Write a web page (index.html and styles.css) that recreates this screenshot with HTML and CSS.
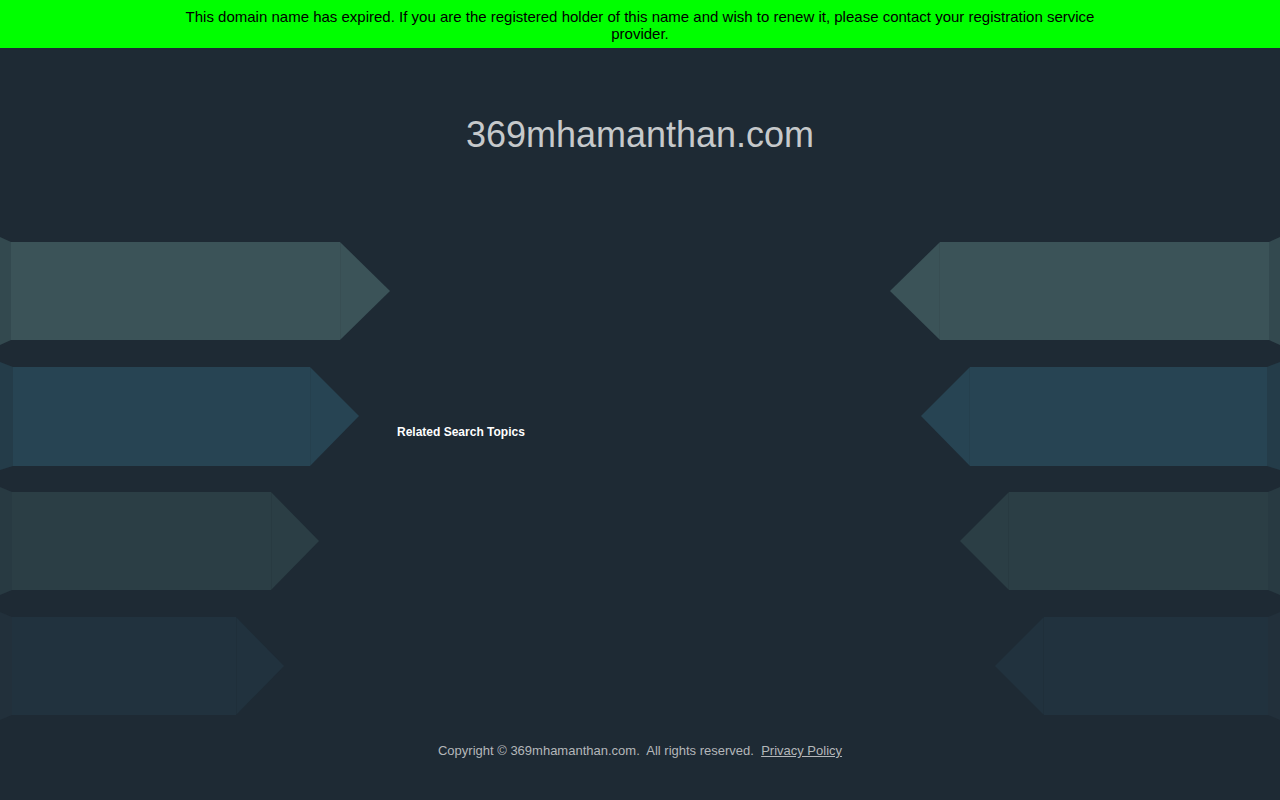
FILE: index.html
```html
<!DOCTYPE html>
<html lang="en">
<head>
<meta charset="utf-8">
<title>369mhamanthan.com</title>
<link rel="stylesheet" href="styles.css">
</head>
<body>
<div class="banner">
  <p class="banner-text">This domain name has expired. If you are the registered holder of this name and wish to renew it, please contact your registration service provider.</p>
</div>
<header class="header">
  <h1 class="domain">369mhamanthan.com</h1>
</header>
<main class="stage">
  <div class="col col-left">
    <svg class="arrow" width="390" height="108" viewBox="0 0 390 108">
      <polygon class="edge1" points="0,0 11,5 11,103 0,108"/>
      <polygon class="main1" points="11,5 340,5 390,54 340,103 11,103"/>
      <line class="seam" x1="340.5" y1="5" x2="340.5" y2="103"/>
    </svg>
    <svg class="arrow" width="359" height="108" viewBox="0 0 359 108">
      <polygon class="edge2" points="0,0 13,5 13,104 0,108"/>
      <polygon class="main2" points="13,5 310,5 359,54 310,104 13,104"/>
      <line class="seam" x1="310.5" y1="5" x2="310.5" y2="104"/>
    </svg>
    <svg class="arrow" width="319" height="108" viewBox="0 0 319 108">
      <polygon class="edge3" points="0,0 12,5 12,103 0,108"/>
      <polygon class="main3" points="12,5 271,5 319,54 271,103 12,103"/>
      <line class="seam" x1="271.5" y1="5" x2="271.5" y2="103"/>
    </svg>
    <svg class="arrow" width="284" height="108" viewBox="0 0 284 108">
      <polygon class="edge4" points="0,0 12,5 12,103 0,108"/>
      <polygon class="main4" points="12,5 236,5 284,54 236,103 12,103"/>
      <line class="seam" x1="236.5" y1="5" x2="236.5" y2="103"/>
    </svg>
  </div>
  <div class="col col-mid">
    <h2 class="topics">Related Search Topics</h2>
  </div>
  <div class="col col-right">
    <svg class="arrow" width="390" height="108" viewBox="0 0 390 108">
      <polygon class="edge1" points="390,0 379,5 379,103 390,108"/>
      <polygon class="main1" points="379,5 50,5 0,54 50,103 379,103"/>
      <line class="seam" x1="49.5" y1="5" x2="49.5" y2="103"/>
    </svg>
    <svg class="arrow" width="359" height="108" viewBox="0 0 359 108">
      <polygon class="edge2" points="359,0 346,5 346,104 359,108"/>
      <polygon class="main2" points="346,5 49,5 0,54 49,104 346,104"/>
      <line class="seam" x1="48.5" y1="5" x2="48.5" y2="104"/>
    </svg>
    <svg class="arrow" width="320" height="108" viewBox="0 0 320 108">
      <polygon class="edge3" points="320,0 308,5 308,103 320,108"/>
      <polygon class="main3" points="308,5 49,5 0,54 49,103 308,103"/>
      <line class="seam" x1="48.5" y1="5" x2="48.5" y2="103"/>
    </svg>
    <svg class="arrow" width="285" height="108" viewBox="0 0 285 108">
      <polygon class="edge4" points="285,0 273,5 273,103 285,108"/>
      <polygon class="main4" points="273,5 49,5 0,54 49,103 273,103"/>
      <line class="seam" x1="48.5" y1="5" x2="48.5" y2="103"/>
    </svg>
  </div>
</main>
<footer class="footer">
  <p class="copy">Copyright &copy; 369mhamanthan.com.&nbsp; All rights reserved.&nbsp; <a class="policy" href="#">Privacy Policy</a></p>
</footer>
</body>
</html>
```

FILE: styles.css
```css
html, body {
  margin: 0;
  padding: 0;
}
body {
  background: #1e2a34;
  font-family: "Liberation Sans", Arial, sans-serif;
  width: 1280px;
  height: 800px;
  overflow: hidden;
}
.banner {
  background: #00ff00;
  height: 48px;
  box-sizing: border-box;
  padding-top: 8px;
}
.banner-text {
  margin: 0 auto;
  width: 930px;
  text-align: center;
  color: #000;
  font-size: 15px;
  line-height: 17px;
}
.header {
  padding-top: 66px;
  height: 124px;
  box-sizing: border-box;
  text-align: center;
}
.domain {
  margin: 0;
  font-size: 36px;
  line-height: 42px;
  font-weight: normal;
  color: #c6c9cb;
}
.stage {
  margin-top: 65px;
  display: flex;
  justify-content: space-between;
  height: 483px;
}
.col {
  display: flex;
  flex-direction: column;
  gap: 17px;
}
.col-left {
  align-items: flex-start;
  width: 390px;
}
.col-right {
  align-items: flex-end;
  width: 390px;
}
.col-mid {
  flex: 1;
  padding-left: 7px;
  padding-top: 187px;
}
.arrow {
  display: block;
}
.topics {
  margin: 0;
  font-size: 12px;
  line-height: 16px;
  font-weight: bold;
  color: #ffffff;
}
.main1 { fill: #3b5358; }
.edge1 { fill: #33494f; }
.main2 { fill: #274453; }
.edge2 { fill: #243c49; }
.main3 { fill: #2b3e45; }
.edge3 { fill: #283a42; }
.main4 { fill: #21323e; }
.edge4 { fill: #22303b; }
.seam {
  stroke: rgba(0, 0, 0, 0.05);
  stroke-width: 1;
}
.footer {
  padding-top: 23px;
  text-align: center;
}
.copy {
  margin: 0;
  font-size: 13px;
  line-height: 16px;
  color: #b4b7ba;
}
.policy {
  color: #b4b7ba;
  text-decoration: underline;
}
```
